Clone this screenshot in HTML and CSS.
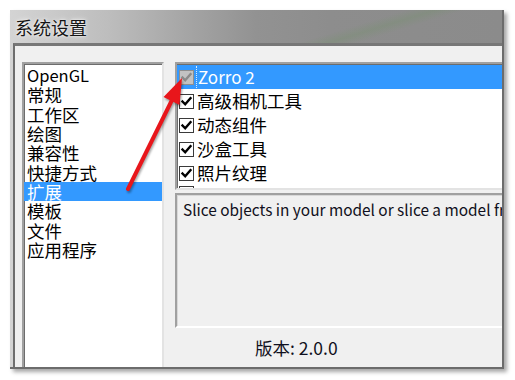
FILE: index.html
```html
<!DOCTYPE html>
<html>
<head>
<meta charset="utf-8">
<title>系统设置</title>
<link rel="stylesheet" href="styles.css">
</head>
<body>
<div class="window">
  <div class="titlebar">系统设置</div>
  <div class="client">
    <ul class="catlist">
      <li class="latin">OpenGL</li>
      <li>常规</li>
      <li>工作区</li>
      <li>绘图</li>
      <li>兼容性</li>
      <li>快捷方式</li>
      <li class="sel">扩展</li>
      <li>模板</li>
      <li>文件</li>
      <li>应用程序</li>
    </ul>
    <div class="right">
      <ul class="checklist">
        <li class="sel"><span class="cb dis"><svg viewBox="0 0 13 13"><path d="M2.5 6.5 L5.2 9.3 L10.5 3.2" /></svg></span><span class="lbl focus">Zorro 2</span></li>
        <li><span class="cb"><svg viewBox="0 0 13 13"><path d="M2.5 6.5 L5.2 9.3 L10.5 3.2" /></svg></span><span class="lbl">高级相机工具</span></li>
        <li><span class="cb"><svg viewBox="0 0 13 13"><path d="M2.5 6.5 L5.2 9.3 L10.5 3.2" /></svg></span><span class="lbl">动态组件</span></li>
        <li><span class="cb"><svg viewBox="0 0 13 13"><path d="M2.5 6.5 L5.2 9.3 L10.5 3.2" /></svg></span><span class="lbl">沙盒工具</span></li>
        <li><span class="cb"><svg viewBox="0 0 13 13"><path d="M2.5 6.5 L5.2 9.3 L10.5 3.2" /></svg></span><span class="lbl">照片纹理</span></li>
        <li class="partial"><span class="cb"><svg viewBox="0 0 13 13"><path d="M2.5 6.5 L5.2 9.3 L10.5 3.2" /></svg></span><span class="lbl">实体工具</span></li>
      </ul>
      <div class="desc">Slice objects in your model or slice a model from a section plane.</div>
      <div class="version">版本: 2.0.0</div>
    </div>
  </div>
</div>
<svg class="arrow" viewBox="0 0 515 380" width="515" height="380">
  <line x1="128" y1="189" x2="173" y2="98" />
  <polygon points="182,78 179.5,105 163.5,97" />
</svg>
</body>
</html>
```

FILE: styles.css
```css
html, body {
  margin: 0;
  padding: 0;
}
body {
  position: relative;
  width: 515px;
  height: 380px;
  overflow: hidden;
  background: #ffffff;
  font-family: "Noto Sans CJK SC", "Noto Sans", sans-serif;
  color: #000;
}
*, *::before, *::after { box-sizing: border-box; }

.window {
  margin: 10px 0 0 10px;
  width: 494px;
  height: 359px;
  display: flex;
  flex-direction: column;
  background:
    linear-gradient(163deg, rgba(120,150,110,0) 66%, rgba(110,145,100,0.28) 71%, rgba(120,150,110,0) 76%) 0 0 / 100% 33px no-repeat,
    linear-gradient(90deg, #d4d4d4 0, #bdbdbd 20%, #a2a2a2 38%, #929292 50%, #8d8d8d 65%, #8b8b8b 100%);
  border-right: 2px solid #6c6c6c;
  border-bottom: 2px solid #6c6c6c;
  box-shadow: 3px 3px 4px rgba(0,0,0,0.35);
}

.titlebar {
  height: 33px;
  flex: none;
  display: flex;
  align-items: center;
  padding-left: 5px;
  padding-top: 1px;
  font-size: 18px;
  color: #151515;
  text-shadow: 0 0 5px rgba(255,255,255,0.9), 0 0 2px rgba(255,255,255,0.8);
}

.client {
  flex: 1;
  min-height: 0;
  margin-left: 3px;
  border-top: 3px solid #777777;
  border-left: 2px solid #6e6e6e;
  background: #f0f0f0;
  display: flex;
  gap: 11px;
  padding: 16px 0 0 7px;
  overflow: hidden;
}

.catlist {
  flex: none;
  width: 142px;
  margin: 0 0 -6px 0;
  padding: 2px 0 0 0;
  list-style: none;
  background: #ffffff;
  border: 2px solid;
  border-color: #a0a0a0 #e3e3e3 #e3e3e3 #a0a0a0;
  box-shadow: inset 1px 1px 0 #6d6d6d;
}
.catlist li {
  height: 19.33px;
  line-height: 19.33px;
  padding-left: 3px;
  font-size: 17.5px;
  white-space: nowrap;
}
.catlist li.latin {
  font-size: 16.5px;
}
.catlist li.sel {
  background: #3399ff;
  color: #ffffff;
}

.right {
  flex: none;
  width: 360px;
  display: flex;
  flex-direction: column;
}

.checklist {
  height: 128px;
  flex: none;
  margin: 0;
  padding: 1px 0 0 0;
  list-style: none;
  overflow: hidden;
  background: #ffffff;
  border: 2px solid;
  border-color: #a0a0a0 #e3e3e3 #e3e3e3 #a0a0a0;
  box-shadow: inset 1px 1px 0 #6d6d6d;
}
.checklist li {
  height: 24px;
  display: flex;
  align-items: center;
  gap: 3px;
  padding-left: 2px;
  font-size: 17.5px;
  white-space: nowrap;
}
.checklist li.partial {
  align-items: flex-start;
  padding-top: 1px;
}
.checklist li.sel {
  background: #3399ff;
  color: #ffffff;
}
.lbl {
  line-height: 22px;
}
.lbl.focus {
  font-size: 17px;
  padding-left: 1px;
  border-left: 1px dotted rgba(255,255,255,0.8);
  margin-left: -1px;
}

.cb {
  flex: none;
  width: 15px;
  height: 15px;
  border: 1px solid #3a3a3a;
  background: #ffffff;
  display: flex;
  align-items: center;
  justify-content: center;
}
.cb svg {
  width: 13px;
  height: 13px;
}
.cb path {
  fill: none;
  stroke: #000;
  stroke-width: 2.4;
  stroke-linecap: square;
}
.cb.dis {
  border-color: #8e8e8e;
  background: #c2c2c2;
}
.cb.dis path {
  stroke: #8a8a8a;
}

.desc {
  flex: none;
  margin-top: 3px;
  height: 135px;
  padding: 4px 0 0 6px;
  border: 2px solid;
  border-color: #a0a0a0 #ffffff #ffffff #a0a0a0;
  box-shadow: inset 1px 1px 0 #d8d8d8;
  font-size: 15.4px;
  line-height: 20px;
  white-space: nowrap;
  overflow: hidden;
  color: #101020;
}

.version {
  flex: 1;
  display: flex;
  align-items: center;
  padding-left: 80px;
  font-size: 17.5px;
  color: #101020;
}

.arrow {
  position: absolute;
  left: 0;
  top: 0;
  pointer-events: none;
  filter: drop-shadow(1px 2px 1px rgba(0,0,0,0.35));
}
.arrow line {
  stroke: #e8161b;
  stroke-width: 4;
  stroke-linecap: round;
}
.arrow polygon {
  fill: #e8161b;
}
```
